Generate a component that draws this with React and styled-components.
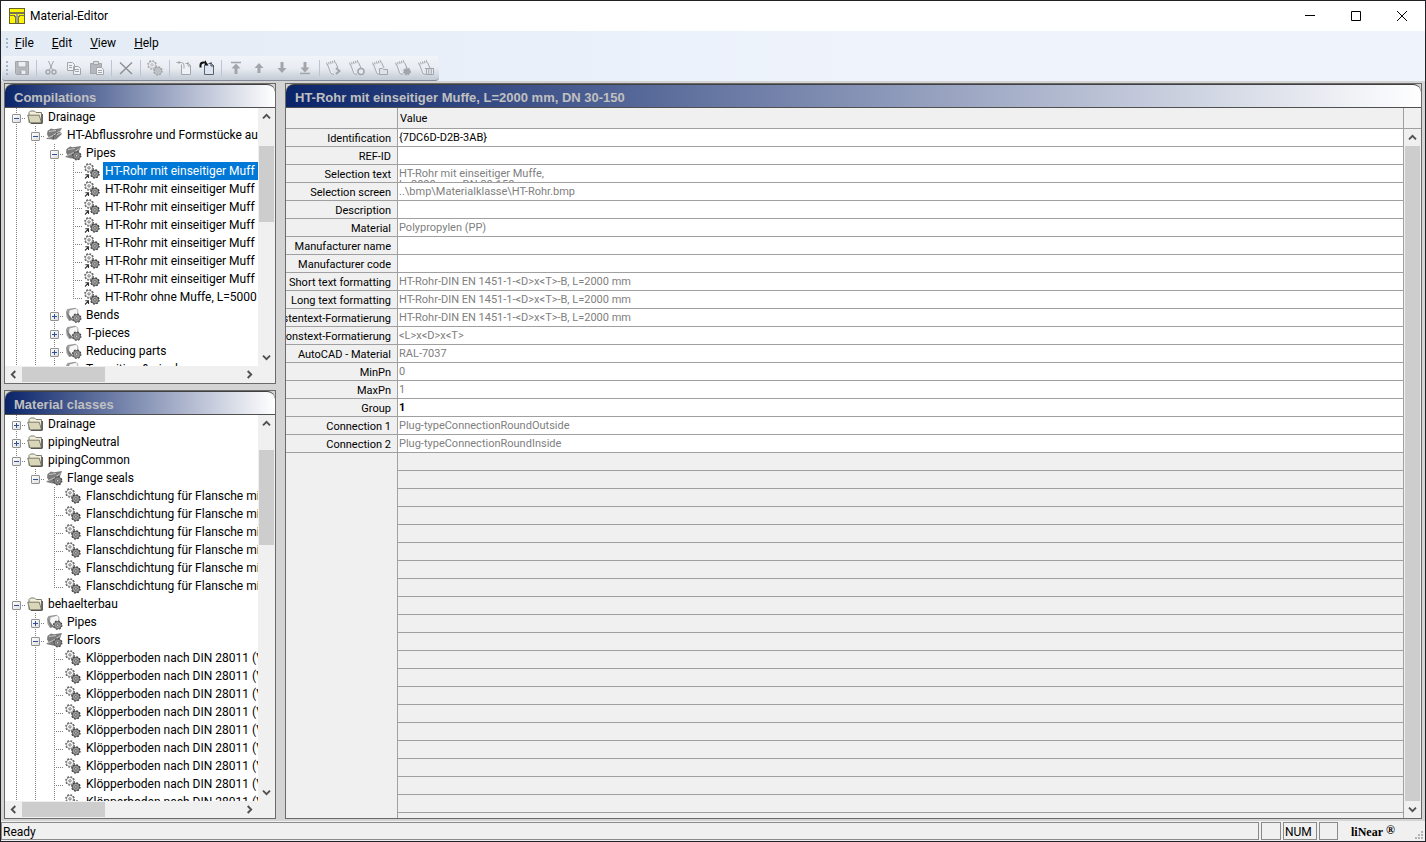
import React from "react";
import styled, { createGlobalStyle } from "styled-components";

const ui = `Roboto, "Open Sans", "Liberation Sans", sans-serif`;
const edge = "#6a6a6a";
const gridLine = "#a0a0a0";

const GlobalStyle = createGlobalStyle`
  * { box-sizing: border-box; }
  body { margin: 0; font: 12px/18px ${ui}; color: #000; }
  button { padding: 0; border: 0; background: none; font: inherit; color: inherit; }
  svg { display: block; flex: none; }
`;

const Window = styled.div`
  display: flex;
  flex-direction: column;
  height: 100vh;
  border: 1px solid #222226;
  background: #d4d4d4;
  overflow: hidden;
`;

/* ---------- title bar, menu, tools ---------- */
const TitleBar = styled.header`
  display: flex;
  align-items: center;
  flex: none;
  height: 30px;
  padding-left: 8px;
  background: #fff;
`;
const Title = styled.h1`
  flex: 1;
  margin: 0 0 0 5px;
  font-size: 12px;
  font-weight: 400;
`;
const WindowButton = styled.button`
  display: grid;
  place-items: center;
  width: 46px;
  height: 30px;
`;
const Bars = styled.div`
  flex: none;
  height: 50px;
  padding-left: 1px;
  background: linear-gradient(90deg, #e3ebf5, #eef3fc 60%);
`;
const MenuBar = styled.nav`
  display: flex;
  align-items: center;
  height: 24px;
`;
const MenuButton = styled.button`
  margin-right: 18px;
  &::first-letter { text-decoration: underline; }
`;
const Grip = styled.span`
  width: 2px;
  height: ${(p) => p.$height}px;
  margin: 0 ${(p) => p.$after}px 0 4px;
  background: repeating-linear-gradient(#a3b4cc 0 2px, transparent 2px 4px);
`;
const ToolBar = styled.div`
  display: inline-flex;
  align-items: center;
  height: 25px;
  margin-top: 1px;
  padding-right: 2px;
  border-bottom: 1px solid #858a98;
  border-radius: 3px 4px 4px 3px;
  background: linear-gradient(#f1f5fa, #e9edf3 50%, #c3cad4);
`;
const ToolButton = styled.button`
  display: grid;
  place-items: center;
  width: 23px;
  height: 22px;
`;
const ToolDivider = styled.span`
  width: 1px;
  height: 16px;
  margin: 0 2px 0 3px;
  background: #bac4d2;
`;

/* ---------- panels ---------- */
const Body = styled.main`
  display: flex;
  flex: 1;
  gap: 9px;
  min-height: 0;
  padding: 2px 3px;
`;
const Sidebar = styled.div`
  display: flex;
  flex-direction: column;
  flex: none;
  gap: 6px;
  width: 272px;
`;
const Panel = styled.section`
  display: flex;
  flex-direction: column;
  flex: ${(p) => p.$share || 1} 1 0;
  min-width: 0;
  min-height: 0;
  border: 1px solid ${edge};
`;
const PanelTitle = styled.h2`
  flex: none;
  height: 24px;
  margin: 0;
  padding-left: 9px;
  overflow: hidden;
  border-bottom: 1px solid #505050;
  border-top: 1px solid #404040;
  border-radius: 8px 8px 0 0;
  background: linear-gradient(90deg, #0a246a, #fff);
  color: #c0c0c0;
  font: bold 13px/26px "Liberation Sans", sans-serif;
  white-space: nowrap;
`;
const TreeArea = styled.div`
  display: grid;
  flex: 1;
  grid-template: minmax(0, 1fr) 17px / minmax(0, 1fr) 17px;
  min-height: 0;
  background: #f0f0f0;
`;
const Tree = styled.ul`
  margin: 0;
  padding: 0 0 0 2px;
  overflow: hidden;
  background: #fff;
  list-style: none;
`;
const TreeRow = styled.li`
  display: flex;
  height: 18px;
  white-space: nowrap;
`;
const Guide = styled.span`
  position: relative;
  display: grid;
  flex: none;
  align-items: center;
  justify-items: center;
  width: 19px;
  height: 18px;
  &::before {
    content: "";
    position: absolute;
    left: 9px;
    top: 0;
    width: 1px;
    height: ${(p) => (p.$kind === "l" ? 10 : 18)}px;
    background: repeating-linear-gradient(#808080 0 1px, transparent 1px 2px);
  }
  &::after {
    content: "";
    position: absolute;
    left: 9px;
    top: 10px;
    width: 10px;
    height: 1px;
    background: ${(p) =>
      p.$kind === "v" ? "none" : "repeating-linear-gradient(90deg, #808080 0 1px, transparent 1px 2px)"};
  }
`;
const Toggle = styled.button`
  position: relative;
  z-index: 1;
  display: grid;
  place-items: center;
  width: 9px;
  height: 9px;
  margin-top: 2px;
  border: 1px solid #919191;
  border-radius: 1px;
  background: linear-gradient(135deg, #fff, #dedede);
`;
const IconSlot = styled.span`
  display: grid;
  flex: none;
  align-items: center;
  justify-items: start;
  width: 20px;
  height: 18px;
  padding-left: 1px;
`;
const Label = styled.span`
  flex: 1;
  padding-left: 2px;
  overflow: hidden;
  background: ${(p) => (p.$selected ? "#0078d7" : "none")};
  color: ${(p) => (p.$selected ? "#fff" : "#000")};
`;

/* ---------- scroll bars ---------- */
const VScroll = styled.div`
  display: grid;
  grid-template-rows: 17px minmax(0, 1fr) 17px;
  width: 17px;
  background: #f0f0f0;
`;
const HScroll = styled.div`
  display: grid;
  grid-template-columns: 17px minmax(0, 1fr) 17px;
  height: 17px;
  background: #f0f0f0;
`;
const VTrack = styled.div`
  display: grid;
  grid-template-rows: ${(p) => p.$split};
  padding: 0 1px;
`;
const HTrack = styled.div`
  display: grid;
  grid-template-columns: ${(p) => p.$split};
  padding: 1px 0;
`;
const Thumb = styled.div`
  grid-area: ${(p) => p.$area};
  background: #cdcdcd;
`;
const ScrollButton = styled.button`
  display: grid;
  place-items: center;
`;

/* ---------- property grid ---------- */
const GridArea = styled.div`
  display: grid;
  flex: 1;
  grid-template-columns: minmax(0, 1fr) 17px;
  min-height: 0;
  background: #f0f0f0;
`;
const Sheet = styled.div`
  display: flex;
  flex-direction: column;
  min-width: 0;
  min-height: 0;
  border-right: 1px solid ${gridLine};
`;
const PropertyTable = styled.table`
  width: 100%;
  border-collapse: separate;
  border-spacing: 0;
  table-layout: fixed;
  font-size: 11px;
`;
const HeadCell = styled.th`
  width: ${(p) => p.$width || "auto"};
  height: 21px;
  padding: 2px 0 0 2px;
  border-bottom: 1px solid ${gridLine};
  border-left: ${(p) => (p.$width ? "0" : `1px solid ${gridLine}`)};
  font-weight: 400;
  text-align: left;
`;
const NameCell = styled.th`
  height: 18px;
  padding: 0;
  border-bottom: 1px solid ${gridLine};
  font-weight: 400;
`;
const Name = styled.div`
  display: flex;
  justify-content: flex-end;
  height: 17px;
  padding-right: 6px;
  overflow: hidden;
  line-height: 19px;
  white-space: nowrap;
`;
const ValueCell = styled.td`
  height: 18px;
  padding: 0;
  border-bottom: 1px solid ${gridLine};
  border-left: 1px solid ${gridLine};
  background: #fff;
`;
const Value = styled.div`
  height: 17px;
  padding: 3px 0 0 1px;
  overflow: hidden;
  color: ${(p) => (p.$tone === "muted" ? "#808080" : "#000")};
  font-weight: ${(p) => (p.$tone === "strong" ? 700 : 400)};
  line-height: 11px;
  white-space: pre;
`;
const EmptyRows = styled.div`
  flex: 1;
  margin-left: 111px;
  border-left: 1px solid ${gridLine};
  background: repeating-linear-gradient(transparent 0 17px, ${gridLine} 17px 18px);
`;
const ScrollColumn = styled.div`
  display: grid;
  grid-template-rows: 21px minmax(0, 1fr);
`;
const Corner = styled.div`
  border-bottom: 1px solid ${gridLine};
`;

/* ---------- status bar ---------- */
const StatusBar = styled.footer`
  display: flex;
  flex: none;
  gap: 2px;
  height: 20px;
  padding-top: 1px;
  background: #f0f0f0;
`;
const StatusCell = styled.div`
  flex: ${(p) => (p.$width ? `0 0 ${p.$width}px` : 1)};
  height: 18px;
  border: 1px solid #8a8a8a;
  padding-left: 1px;
  line-height: 19px;
`;
const Brand = styled.div`
  display: flex;
  flex: 0 0 63px;
  gap: 3px;
  padding-left: 11px;
  font: bold 12px/20px "Liberation Serif", serif;
`;
const Mark = styled.span`
  line-height: 16px;
`;
const SizeGrip = styled.div`
  align-self: flex-end;
  width: 20px;
  padding: 0 0 2px 10px;
`;

/* ---------- drawings ---------- */
const Logo = () => (
  <svg width="16" height="16" viewBox="0 0 16 16" shapeRendering="crispEdges">
    <path d="M0 0h16v16H0z" fill="#65622a" />
    <path d="M1 1h14v14H1z" fill="#fff500" />
    <path d="M1 4h14v2H1z" fill="#77764a" />
    <path d="M1 7h5v1H1zM10 7h5v1h-5zM5 8h1v1H5zM10 8h1v1h-1zM6 8h1v7H6zM9 8h1v7H9z" fill="#77764a" />
    <path d="M7 6h2v9H7z" fill="#a4a39a" />
  </svg>
);

const Chevron = ({ turn = 0 }) => (
  <svg width="9" height="9" viewBox="0 0 9 9">
    <path d="M1 6.300 4.500 2.800 8 6.300" fill="none" stroke="#505050" strokeWidth="1.900" transform={`rotate(${turn} 4.500 4.500)`} />
  </svg>
);

const Cog = ({ x, y, fill, stroke, hub = "#fff" }) => (
  <g transform={`translate(${x} ${y})`}>
    <circle r="4.100" fill={fill} stroke={stroke} strokeWidth="1.300" strokeDasharray="1.610 1.610" />
    <circle r="3.500" fill={fill} stroke={stroke} strokeWidth="0.500" />
    <circle r="1.200" fill={hub} stroke={stroke} strokeWidth="0.700" />
  </g>
);

const Gears = ({ shortcut, pale }) => (
  <svg width="16" height="16" viewBox="0 0 16 16">
    <Cog x={5} y={4.9} fill={pale ? "#eef0f3" : "#fff"} stroke={pale ? "#94979c" : "#444"} />
    <Cog x={10.9} y={10.9} fill={pale ? "#c6c9cc" : "#a0a0a0"} stroke={pale ? "#94979c" : "#2c2c2c"} hub={pale ? "#eee" : "#fff"} />
    {shortcut && <path d="M1 15.500 4 12.300M1.300 11.700h3.200v3.200" fill="none" stroke="#333" strokeWidth="1.100" />}
  </svg>
);

const FolderIcon = () => (
  <svg width="16" height="14" viewBox="0 0 16 14">
    <path d="M2 12.500V2.500L3.500 1h4L9 2.500h5.500v10z" fill="#f1efd9" stroke="#7f7d70" />
    <path d="M3 13 .7 5.200h11.600L14.500 13z" fill="#d9d6b9" stroke="#7a786c" />
    <path d="M15.300 4v9.300H4" fill="none" stroke="#3c3c3a" />
  </svg>
);

const ClassClosed = () => (
  <svg width="17" height="16" viewBox="0 0 17 16">
    <path d="M1 4.500 2.500 2l8-1.200 2.700 2.300.3 6-4 3.700L4 14 1.500 10z" fill="#9b9b9b" />
    <path d="M4.500 3.500 11 1.800l1.500 1.500-.3 6-4.700 2.800L4 8z" fill="#f6f6f6" />
    <path d="M1.500 4.500 4 8l3.500 4.500-3 1z" fill="#777" />
    <Cog x={11.7} y={11.2} fill="#9a9a9a" stroke="#444" hub="#eee" />
  </svg>
);

const ClassOpen = () => (
  <svg width="17" height="16" viewBox="0 0 17 16">
    <path d="M1.500 4 5 1.500l3 .7L16 1l-1.500 4-2 5-6 3.500L0 12l2.500-2L1 7.500z" fill="#7c7c7c" />
    <path d="M3 4.500 10 3.500M1.500 11 7 8.500 14.500 3.500" fill="none" stroke="#c2c2c2" />
    <Cog x={11.7} y={10.8} fill="#8c8c8c" stroke="#444" hub="#eee" />
  </svg>
);

const BookOpen = () => (
  <svg width="17" height="16" viewBox="0 0 17 16">
    <path d="M1.500 4 5 1.500l3 .7L16 1l-2 3.500 2 2.500-6 5.500L0 12l2.500-2L1 7.500z" fill="#7c7c7c" />
    <path d="M3 4.500 10 3.500M2 11l5-2.500 7.500-5M9 8.500l6-2.500" fill="none" stroke="#ccc" />
    <path d="M8 8 7 13M11 5.500 9.500 9" stroke="#5a5a5a" />
  </svg>
);

const treeIcons = {
  folder: <FolderIcon />,
  closed: <ClassClosed />,
  open: <ClassOpen />,
  book: <BookOpen />,
  link: <Gears shortcut />,
  gears: <Gears />,
};

const ink = "#a2a5aa";
const Glyph = ({ children }) => (
  <svg width="16" height="16" viewBox="0 0 16 16" fill="none" stroke={ink}>
    {children}
  </svg>
);
const Notepad = ({ children }) => (
  <Glyph>
    <path d="M1.500 4.500 5 13.500l3 1M9.500 2.500 12 8" fill="#f4f6f8" />
    <path d="m.5 4 9.500-3" strokeWidth="2.500" strokeDasharray="1 1" />
    {children}
  </Glyph>
);
const Page = ({ dark, children }) => (
  <Glyph>
    <path d="M5.500 4.500v10h9v-9l-2-2h-3" fill={dark ? "#dfe5f0" : "#eef1f5"} stroke={dark ? "#596170" : ink} />
    <path d="M12 2v4h3" stroke={dark ? "#40444e" : ink} />
    {children}
  </Glyph>
);

const tools = [
  ["Save", <Glyph><path d="M1.500 1.500h13v13h-12l-1-1z" fill="#b7babf" /><path d="M4 1.500h8V7H4zM5 10h7v4.500H5z" fill="#eceff3" /><path d="M6.500 11v3" strokeWidth="2" /></Glyph>],
  null,
  ["Cut", <Glyph><path d="M5.500 1 9.500 10M10.500 1 6.500 10" /><circle cx="5" cy="12" r="2" strokeWidth="1.400" /><circle cx="11" cy="12" r="2" strokeWidth="1.400" /></Glyph>],
  ["Copy", <Glyph><path d="M1.500 2.500h5l2 2v6h-7zM7.500 6.500h5l2 2v6h-7z" fill="#eef1f5" /><path d="M3 5.500h3M3 7.500h3M9 9.500h4M9 11.500h4" /></Glyph>],
  ["Paste", <Glyph><path d="M1.500 3.500h11v10h-11z" fill="#b4b7bc" /><path d="M4.500 1.500h5v3h-5z" fill="#ddd" /><path d="M7.500 7.500h5l2 2v5h-7z" fill="#f2f4f7" /><path d="M9 10.500h4M9 12.500h4" /></Glyph>],
  null,
  ["Delete", <Glyph><path d="M2 2.500 14 14M14 2.500 2 14" stroke="#8b8e93" strokeWidth="1.400" /></Glyph>],
  null,
  ["Material", <Gears pale />],
  null,
  ["Import", <Page><path d="M.5 2.500h5q2.500 0 2.500 3v3M3 1v3" /></Page>],
  ["Export", <Page dark><path d="M1.500 7.500V5q0-2.500 3-2.500H7" stroke="#111" strokeWidth="2" /><path d="M6 0v5.500h3.500z" fill="#111" stroke="none" /></Page>],
  null,
  ["Move to top", <Glyph><path d="M3 2.500h10" strokeWidth="1.500" /><path d="M8 14V7" strokeWidth="3" /><path d="m3.500 8.500 4.500-5 4.500 5z" fill={ink} stroke="none" /></Glyph>],
  ["Move up", <Glyph><path d="M8 13V7" strokeWidth="3" /><path d="m3.500 8 4.500-5 4.500 5z" fill={ink} stroke="none" /></Glyph>],
  ["Move down", <Glyph><path d="M8 2v7" strokeWidth="3" /><path d="m3.500 8 4.500 5 4.500-5z" fill={ink} stroke="none" /></Glyph>],
  ["Move to bottom", <Glyph><path d="M3 13.500h10" strokeWidth="1.500" /><path d="M8 2v6" strokeWidth="3" /><path d="m3.500 7.500 4.500 5 4.500-5z" fill={ink} stroke="none" /></Glyph>],
  null,
  ["Pipe list", <Notepad><path d="m10 8 3.500 3-3.500 3" strokeWidth="2" /></Notepad>],
  ["Component list", <Notepad><circle cx="12" cy="11.500" r="3" fill="#e8ebef" strokeWidth="1.500" /></Notepad>],
  ["Folder list", <Notepad><path d="M7.500 8.500h3l1 1h4v5h-8z" fill="#dfe2e6" /></Notepad>],
  ["Settings list", <Notepad><circle cx="12" cy="11.500" r="3" fill={ink} strokeWidth="2" strokeDasharray="1.500 1" /></Notepad>],
  ["Delete list", <Notepad><path d="M8.500 8.500h7v6h-7zM7 8.500h9M10.800 8v6.500M13.300 8v6.500" fill="#e4e7eb" /></Notepad>],
];

/* Guides: v = line passing by, t = branch, l = last branch; +, - and _ carry a toggle. */
const repeat = (n, row) => Array.from({ length: n }, () => row);

const compilations = [
  ["-", "folder", "Drainage"],
  ["v-", "book", "HT-Abflussrohre und Formstücke au"],
  ["vv-", "open", "Pipes"],
  ["vvvt", "link", "HT-Rohr mit einseitiger Muff", true],
  ...repeat(6, ["vvvt", "link", "HT-Rohr mit einseitiger Muff"]),
  ["vvvl", "link", "HT-Rohr ohne Muffe, L=5000"],
  ["vv+", "closed", "Bends"],
  ["vv+", "closed", "T-pieces"],
  ["vv+", "closed", "Reducing parts"],
  ["vv+", "closed", "Transition & single"],
];

const materialClasses = [
  ["+", "folder", "Drainage"],
  ["+", "folder", "pipingNeutral"],
  ["-", "folder", "pipingCommon"],
  ["v_", "open", "Flange seals"],
  ...repeat(5, ["v t", "gears", "Flanschdichtung für Flansche mi"]),
  ["v l", "gears", "Flanschdichtung für Flansche mi"],
  ["-", "folder", "behaelterbau"],
  ["v+", "closed", "Pipes"],
  ["v-", "open", "Floors"],
  ...repeat(9, ["vvt", "gears", "Klöpperboden nach DIN 28011 (V"]),
];

const properties = [
  ["Identification", "{7DC6D-D2B-3AB}", "plain"],
  ["REF-ID", ""],
  ["Selection text", "HT-Rohr mit einseitiger Muffe,\nL=2000 mm, DN 30-150"],
  ["Selection screen", "..\\bmp\\Materialklasse\\HT-Rohr.bmp"],
  ["Description", ""],
  ["Material", "Polypropylen (PP)"],
  ["Manufacturer name", ""],
  ["Manufacturer code", ""],
  ["Short text formatting", "HT-Rohr-DIN EN 1451-1-<D>x<T>-B, L=2000 mm"],
  ["Long text formatting", "HT-Rohr-DIN EN 1451-1-<D>x<T>-B, L=2000 mm"],
  ["listentext-Formatierung", "HT-Rohr-DIN EN 1451-1-<D>x<T>-B, L=2000 mm"],
  ["sionstext-Formatierung", "<L>x<D>x<T>"],
  ["AutoCAD - Material", "RAL-7037"],
  ["MinPn", "0"],
  ["MaxPn", "1"],
  ["Group", "1", "strong"],
  ["Connection 1", "Plug-typeConnectionRoundOutside"],
  ["Connection 2", "Plug-typeConnectionRoundInside"],
];

const Blank = styled.span`
  flex: none;
  width: 19px;
`;

function Node({ row: [guides, icon, text, selected] }) {
  return (
    <TreeRow>
      {[...guides].map((g, i) => {
        if (g === " ") return <Blank key={i} />;
        const toggles = "+-_".includes(g);
        return (
          <Guide key={i} $kind={g === "_" ? "l" : g}>
            {toggles && (
              <Toggle aria-label={g === "+" ? "Expand" : "Collapse"}>
                <svg width="5" height="5" viewBox="0 0 5 5" stroke="#2f4f9f" shapeRendering="crispEdges">
                  <path d={g === "+" ? "M0 2.500h5M2.500 0v5" : "M0 2.500h5"} />
                </svg>
              </Toggle>
            )}
          </Guide>
        );
      })}
      <IconSlot>{treeIcons[icon]}</IconSlot>
      <Label $selected={selected}>{text}</Label>
    </TreeRow>
  );
}

function VerticalScroll({ split, area = "2 / 1" }) {
  return (
    <VScroll>
      <ScrollButton aria-label="Scroll up"><Chevron /></ScrollButton>
      <VTrack $split={split}><Thumb $area={area} /></VTrack>
      <ScrollButton aria-label="Scroll down"><Chevron turn={180} /></ScrollButton>
    </VScroll>
  );
}

function TreePanel({ title, rows, share, split }) {
  return (
    <Panel $share={share}>
      <PanelTitle>{title}</PanelTitle>
      <TreeArea>
        <Tree>
          {rows.map((row, i) => <Node key={i} row={row} />)}
        </Tree>
        <VerticalScroll split={split} />
        <HScroll>
          <ScrollButton aria-label="Scroll left"><Chevron turn={-90} /></ScrollButton>
          <HTrack $split="83fr 137fr"><Thumb $area="1 / 1" /></HTrack>
          <ScrollButton aria-label="Scroll right"><Chevron turn={90} /></ScrollButton>
        </HScroll>
      </TreeArea>
    </Panel>
  );
}

export default function App() {
  return (
    <Window>
      <GlobalStyle />
      <TitleBar>
        <Logo />
        <Title>Material-Editor</Title>
        <WindowButton aria-label="Minimize">
          <svg width="10" height="10" viewBox="0 0 10 10" stroke="#000"><path d="M0 4.500h10" /></svg>
        </WindowButton>
        <WindowButton aria-label="Maximize">
          <svg width="10" height="10" viewBox="0 0 10 10" stroke="#000" fill="none"><path d="M.5.5h9v9h-9z" /></svg>
        </WindowButton>
        <WindowButton aria-label="Close">
          <svg width="10" height="10" viewBox="0 0 10 10" stroke="#000"><path d="m0 0 10 10M10 0 0 10" /></svg>
        </WindowButton>
      </TitleBar>

      <Bars>
        <MenuBar>
          <Grip $height={10} $after={7} />
          {["File", "Edit", "View", "Help"].map((m) => <MenuButton key={m}>{m}</MenuButton>)}
        </MenuBar>
        <ToolBar role="toolbar">
          <Grip $height={14} $after={2} />
          {tools.map((tool, i) =>
            tool ? <ToolButton key={i} aria-label={tool[0]}>{tool[1]}</ToolButton> : <ToolDivider key={i} />
          )}
        </ToolBar>
      </Bars>

      <Body>
        <Sidebar>
          <TreePanel title="Compilations" rows={compilations} share={301} split="21fr 76fr 127fr" />
          <TreePanel title="Material classes" rows={materialClasses} share={429} split="18fr 95fr 239fr" />
        </Sidebar>
        <Panel>
          <PanelTitle>HT-Rohr mit einseitiger Muffe, L=2000 mm, DN 30-150</PanelTitle>
          <GridArea>
            <Sheet>
              <PropertyTable>
                <thead>
                  <tr>
                    <HeadCell $width="111px" aria-label="Property" />
                    <HeadCell scope="col">Value</HeadCell>
                  </tr>
                </thead>
                <tbody>
                  {properties.map(([name, value, tone = "muted"]) => (
                    <tr key={name}>
                      <NameCell scope="row"><Name>{name}</Name></NameCell>
                      <ValueCell><Value $tone={tone}>{value}</Value></ValueCell>
                    </tr>
                  ))}
                </tbody>
              </PropertyTable>
              <EmptyRows />
            </Sheet>
            <ScrollColumn>
              <Corner />
              <VerticalScroll split="minmax(0, 1fr)" area="1 / 1" />
            </ScrollColumn>
          </GridArea>
        </Panel>
      </Body>

      <StatusBar>
        <StatusCell>Ready</StatusCell>
        <StatusCell $width={20} />
        <StatusCell $width={34}>NUM</StatusCell>
        <StatusCell $width={19} />
        <Brand>liNear <Mark>®</Mark></Brand>
        <SizeGrip>
          <svg width="8" height="8" viewBox="0 0 8 8" fill="#b4b4b4">
            <path d="M6 0h2v2H6zM3 3h2v2H3zM6 3h2v2H6zM0 6h2v2H0zM3 6h2v2H3zM6 6h2v2H6z" />
          </svg>
        </SizeGrip>
      </StatusBar>
    </Window>
  );
}
